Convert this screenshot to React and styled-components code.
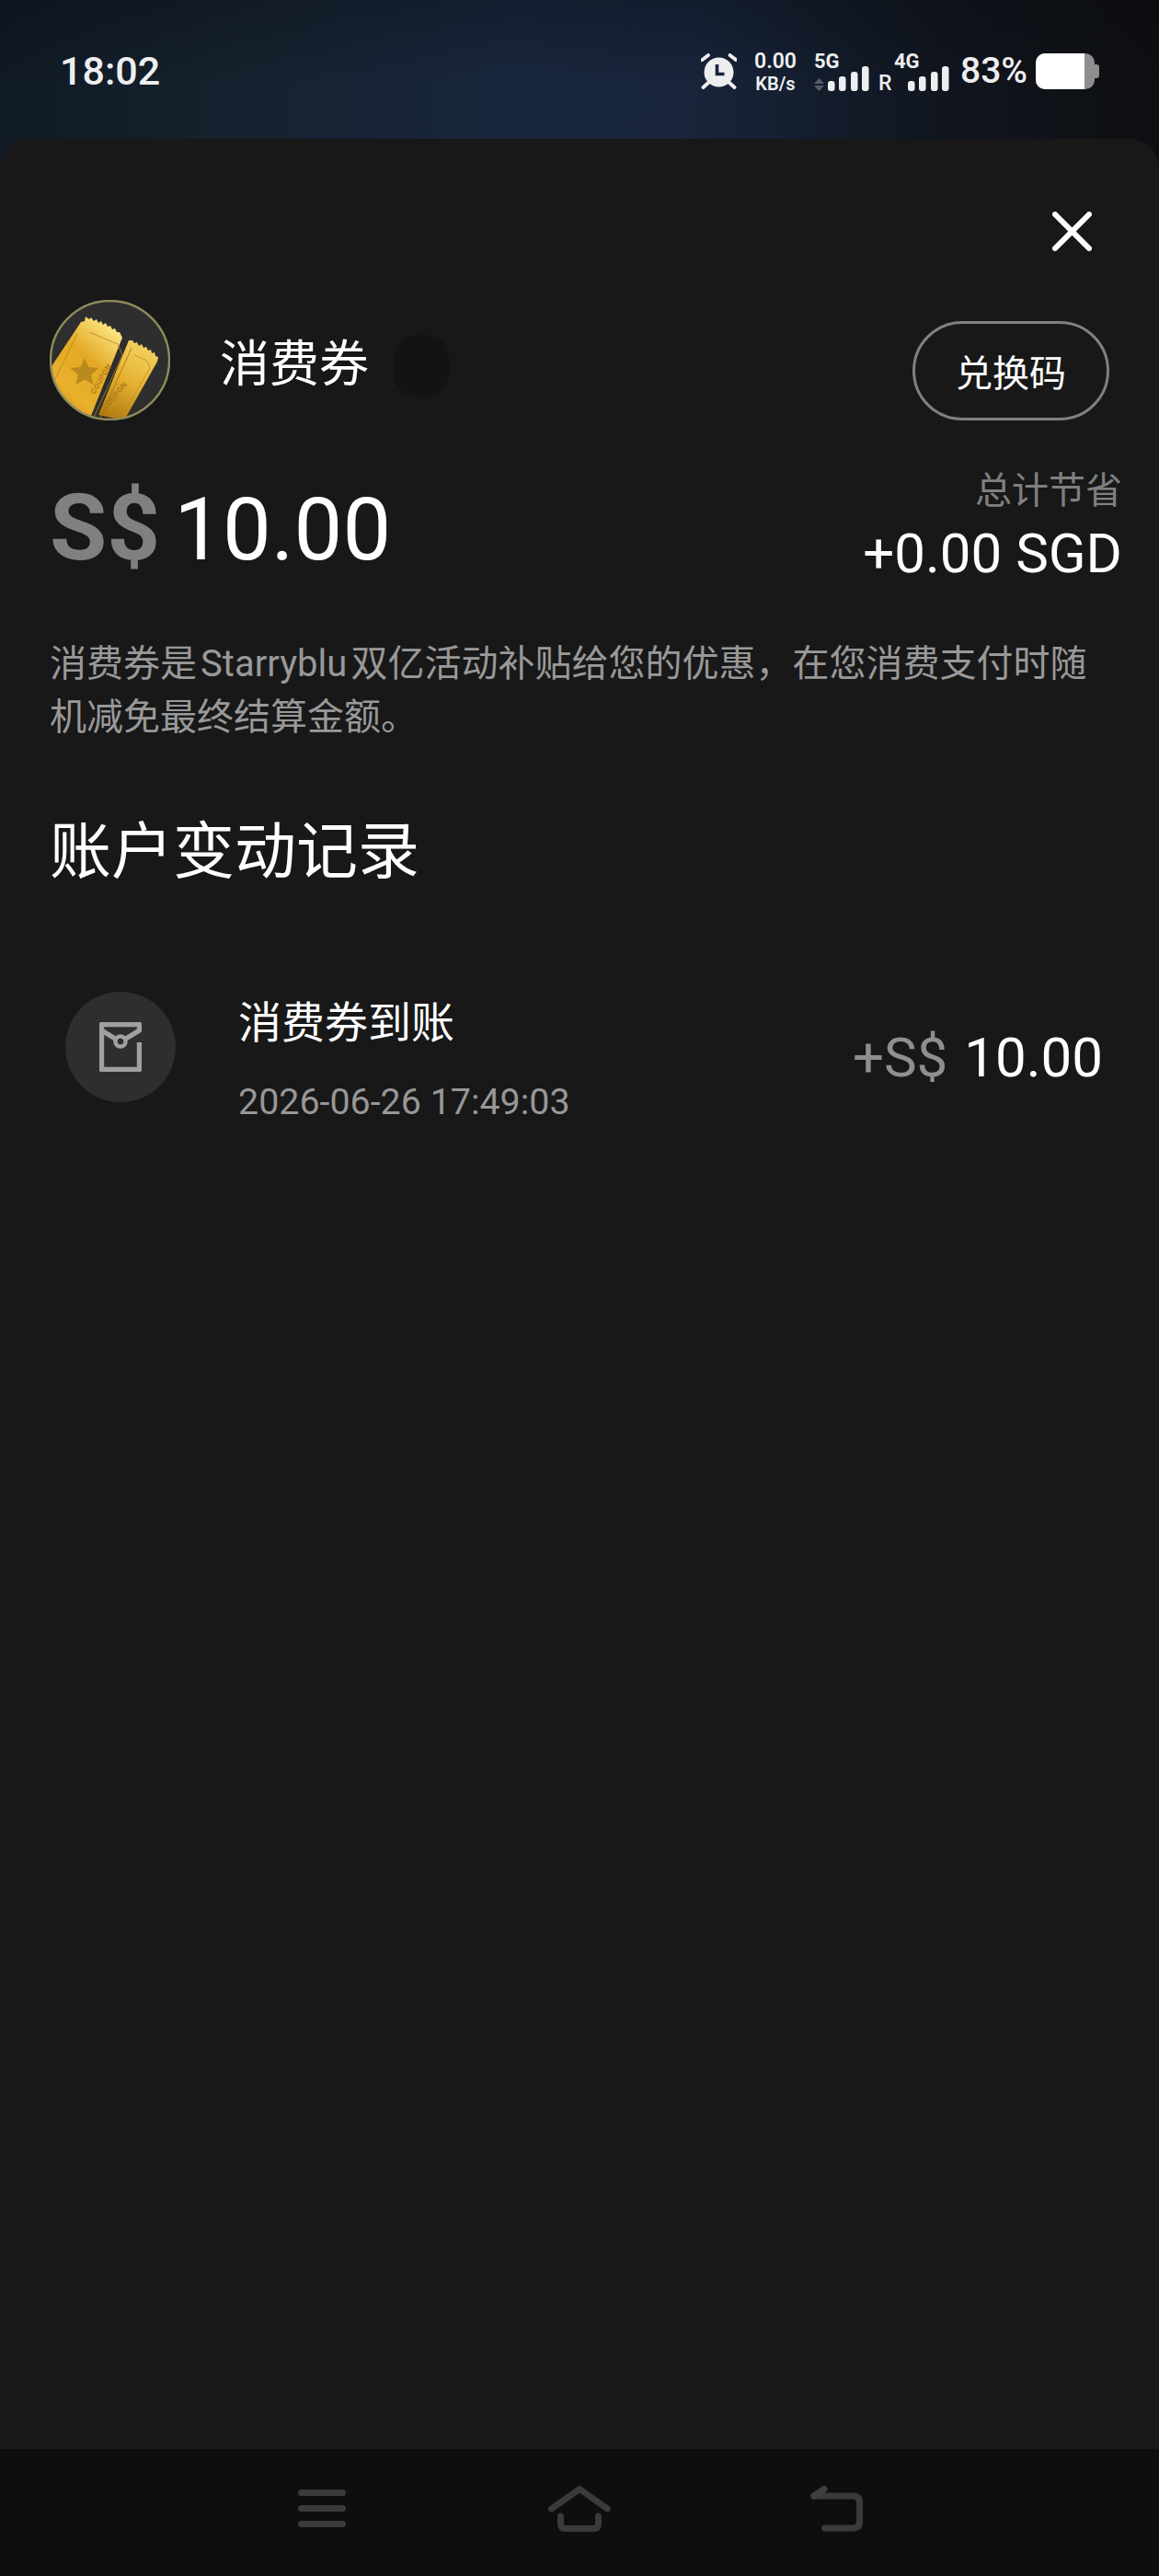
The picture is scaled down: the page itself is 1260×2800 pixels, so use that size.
import React from 'react';
import styled, { createGlobalStyle } from 'styled-components';

const GlobalStyle = createGlobalStyle`
    html, body {
        margin: 0;
        padding: 0;
        background: #181818;
    }
    * {
        box-sizing: border-box;
    }
`;

const FONT = `Roboto, "Noto Sans CJK SC", sans-serif`;

const Page = styled.div`
    width: 1260px;
    height: 2800px;
    display: flex;
    flex-direction: column;
    font-family: ${FONT};
    overflow: hidden;
    background:
        linear-gradient(180deg, rgba(6, 8, 12, .28) 0, rgba(6, 8, 12, 0) 90px),
        linear-gradient(90deg, #101a25 0%, #16222f 22%, #18263d 44%, #17243a 60%, #10151d 82%, #0e0f12 100%);
`;

const StatusBar = styled.div`
    height: 151px;
    flex: none;
    padding: 58px 65px 0 65px;
    display: flex;
    justify-content: space-between;
    align-items: flex-start;
    color: #eeeef0;
`;

const Time = styled.div`
    font-size: 43px;
    font-weight: 500;
    line-height: 39px;
`;

const StatusIcons = styled.div`
    display: flex;
    align-items: flex-start;
`;

const SpeedStack = styled.div`
    width: 46px;
    margin: 0 19px;
    display: flex;
    flex-direction: column;
    align-items: center;
    font-weight: 600;
`;

const SpeedValue = styled.div`
    font-size: 23px;
    line-height: 18px;
    white-space: nowrap;
`;

const SpeedUnit = styled.div`
    font-size: 20px;
    line-height: 18px;
    margin-top: 6px;
    white-space: nowrap;
`;

const Sim = styled.div`
    display: flex;
    flex-direction: column;
    width: ${props => props.width}px;
    margin-right: ${props => props.gap}px;
`;

const NetLabel = styled.div`
    font-size: 22px;
    font-weight: 700;
    line-height: 16px;
    margin-left: ${props => props.offset || 0}px;
    margin-top: 1px;
    height: 13px;
`;

const SignalRow = styled.div`
    display: flex;
    align-items: flex-end;
    height: 27px;
`;

const RoamLetter = styled.span`
    font-size: 23px;
    font-weight: 500;
    line-height: 16px;
    width: 32px;
`;

const Percent = styled.div`
    font-size: 39px;
    font-weight: 500;
    line-height: 39px;
    width: 71px;
    margin-right: 11px;
    white-space: nowrap;
`;

const Battery = styled.div`
    width: 64px;
    height: 39px;
    border-radius: 10px;
    overflow: hidden;
    background: #8e8e8e;
    &::before {
        content: '';
        display: block;
        width: 53px;
        height: 100%;
        background: #fff;
    }
`;

const BatteryWrap = styled.div`
    display: flex;
    align-items: center;
    height: 39px;
`;

const BatteryNub = styled.div`
    width: 5px;
    height: 15px;
    border-radius: 0 3px 3px 0;
    background: #8e8e8e;
`;

const Sheet = styled.div`
    flex: 1;
    background: #181818;
    border-radius: 32px 32px 0 0;
    padding: 79px 54px 0;
    display: flex;
    flex-direction: column;
    color: #fff;
`;

const CloseRow = styled.div`
    display: flex;
    justify-content: flex-end;
    padding-right: 19px;
    height: 96px;
`;

const HeaderRow = styled.div`
    display: flex;
    align-items: flex-start;
    height: 131px;
`;

const CouponBadge = styled.div`
    width: 131px;
    height: 131px;
    flex: none;
`;

const CouponTitle = styled.div`
    margin: 37px 0 0 54px;
    font-size: 54px;
    line-height: 68px;
    width: 189px;
`;

const Blob = styled.div`
    width: 60px;
    height: 67px;
    margin-top: 38px;
    border-radius: 25px;
    background: #131313;
`;

const RedeemButton = styled.button`
    margin: 23px 0 0 auto;
    width: 214px;
    height: 108px;
    border: 3px solid #808080;
    border-radius: 54px;
    background: transparent;
    color: #fff;
    font-family: ${FONT};
    font-size: 40px;
    padding: 0;
`;

const BalanceRow = styled.div`
    display: flex;
    justify-content: space-between;
    align-items: flex-start;
    margin-top: 48px;
`;

const Balance = styled.div`
    display: flex;
    align-items: baseline;
    line-height: 112px;
    margin-top: 13px;
`;

const BalanceCurrency = styled.span`
    color: #808080;
    font-size: 101px;
    font-weight: 700;
    margin-right: 15px;
`;

const BalanceValue = styled.span`
    font-size: 94px;
`;

const Savings = styled.div`
    display: flex;
    flex-direction: column;
    align-items: flex-end;
    margin-right: -14px;
    margin-top: 1px;
`;

const SavingsLabel = styled.div`
    color: #808080;
    font-size: 40px;
    line-height: 56px;
`;

const SavingsValue = styled.div`
    font-size: 60px;
    line-height: 70px;
    margin-top: 5px;
`;

const Description = styled.p`
    margin: 56px 0 0;
    width: 1152px;
    color: #999;
    font-size: 40px;
    line-height: 58px;
`;

const SectionTitle = styled.h2`
    margin: 72px 0 0;
    font-size: 67px;
    font-weight: 400;
    line-height: 90px;
`;

const RecordRow = styled.div`
    display: flex;
    align-items: flex-start;
    margin-top: 107px;
    padding: 0 7px 0 17px;
`;

const RecordIcon = styled.div`
    width: 120px;
    height: 120px;
    flex: none;
    border-radius: 50%;
    background: #2e2e2e;
    display: flex;
    align-items: center;
    justify-content: center;
`;

const RecordText = styled.div`
    margin-left: 68px;
    display: flex;
    flex-direction: column;
`;

const RecordTitle = styled.div`
    font-size: 47px;
    line-height: 64px;
    margin-top: 2px;
`;

const RecordDate = styled.div`
    color: #979797;
    font-size: 39.4px;
    line-height: 48px;
    margin-top: 30px;
`;

const RecordAmount = styled.div`
    margin-left: auto;
    margin-top: 36px;
    font-size: 60px;
    line-height: 72px;
    display: flex;
    align-items: baseline;
`;

const RecordCurrency = styled.span`
    color: #8f8f8f;
    margin-right: 18px;
`;

const NavBar = styled.div`
    height: 138px;
    flex: none;
    background: #0e0e0e;
    display: flex;
    align-items: flex-start;
    padding: 40px 0 0 324px;
`;

const NavSlot = styled.div`
    width: ${props => props.width}px;
    display: flex;
`;

const Hamburger = styled.div`
    width: 52px;
    display: flex;
    flex-direction: column;
    gap: 10px;
    margin-top: 4px;
    span {
        height: 7px;
        border-radius: 4px;
        background: #3a3a3a;
    }
`;

const AlarmIcon = () => (
    <svg width="39" height="39" viewBox="0 0 39 39">
        <circle cx="19.5" cy="20.5" r="16" fill="#eeeef0" />
        <path d="M17.5 12v10.5h8" fill="none" stroke="#17233a" strokeWidth="3.6" />
        <path d="M1.5 7l6.5-5M31.5 2l6.5 5M2.5 37l5.5-5M31 32l5.5 5" fill="none" stroke="#eeeef0" strokeWidth="3.8" strokeLinecap="round" />
    </svg>
);

const SignalBars = () => (
    <svg width="45" height="27" viewBox="0 0 45 27">
        <rect x="0" y="16" width="7.5" height="11" rx="3" fill="#eeeef0" />
        <rect x="12" y="11" width="7.5" height="16" rx="3" fill="#eeeef0" />
        <rect x="25" y="6" width="7.5" height="21" rx="3" fill="#eeeef0" />
        <rect x="37" y="0" width="7.5" height="27" rx="3" fill="#eeeef0" />
    </svg>
);

const DataArrows = () => (
    <svg width="15" height="14" viewBox="0 0 15 14" style={{ flex: 'none' }}>
        <path d="M0 6L5.5 0 11 6zM0 8l5.5 6L11 8z" fill="#555c66" />
    </svg>
);

const CloseIcon = () => (
    <svg width="43" height="43" viewBox="0 0 43 43">
        <path d="M3 3l37 37M40 3L3 40" stroke="#fff" strokeWidth="6" strokeLinecap="round" />
    </svg>
);

const CouponArt = () => (
    <svg width="131" height="131" viewBox="4 6 131 131">
        <defs>
            <linearGradient id="ticketGold" x1="0.25" y1="1" x2="0.85" y2="0.1">
                <stop offset="0" stopColor="#c68e1a" />
                <stop offset="0.3" stopColor="#e9b02c" />
                <stop offset="0.65" stopColor="#e3a925" />
                <stop offset="1" stopColor="#fbe27d" />
            </linearGradient>
            <linearGradient id="ticketBack" x1="0.7" y1="0" x2="0.3" y2="1">
                <stop offset="0" stopColor="#f3d262" />
                <stop offset="0.5" stopColor="#e6b232" />
                <stop offset="1" stopColor="#b27c12" />
            </linearGradient>
            <clipPath id="badgeClip">
                <circle cx="69.5" cy="71.5" r="64.5" />
            </clipPath>
        </defs>
        <circle cx="69.5" cy="71.5" r="64.5" fill="#2e2e2e" />
        <g clipPath="url(#badgeClip)">
            <path
                d="M90 50l4 0 2 3 3-1 2 4 3-2 2 4 3-1 2 4 3-1 1 4 3-1 1 4 3 1-1 5-36 64-28-6z"
                fill="url(#ticketBack)"
            />
            <path
                d="M38 30l4-1 1-5 4 3 2-2 3 4 3-2 2 4 3-2 2 4 3-2 2 4 3-1 2 4 3-1 2 4 3 0 3 6-38 95-52-24 0-20z"
                fill="url(#ticketGold)"
            />
            <path d="M47 41l31 13 5 12-33 72M34 43L7 98" fill="none" stroke="#b9851c" strokeWidth="0.8" />
            <path d="M93 58L58 137" stroke="#b07c18" strokeWidth="1" />
            <path d="M96 66l14 6 3 8-30 52" fill="none" stroke="#c08c22" strokeWidth="0.8" />
            <path
                d="M42 69l4.4 10 11 1-8.3 7.2 2.5 10.8-9.6-5.6-9.5 5.7 2.4-10.8-8.4-7.2 11-1.1z"
                fill="#b98a1f"
            />
            <text x="0" y="0" fontFamily="Roboto, sans-serif" fontSize="8" fontWeight="500" fill="#a8761a" transform="translate(53 109) rotate(-60)" textLength="36">COUPON</text>
            <text x="0" y="0" fontFamily="Roboto, sans-serif" fontSize="8" fontWeight="500" fill="#a8761a" transform="translate(65 126) rotate(-50)" textLength="36">COUPON</text>
        </g>
        <circle cx="69.5" cy="71.5" r="64.5" fill="none" stroke="#8f8b5c" strokeWidth="2.4" />
    </svg>
);

const EnvelopeIcon = () => (
    <svg width="46" height="54" viewBox="0 0 46 54">
        <path d="M43.5 22v29.5h-41v-49h41V9L28 18.5" fill="none" stroke="#a0a0a0" strokeWidth="5.4" strokeLinejoin="round" />
        <path d="M2.5 9L18 18.5" fill="none" stroke="#a0a0a0" strokeWidth="5.4" />
        <circle cx="23" cy="21" r="5.5" fill="none" stroke="#a0a0a0" strokeWidth="4.5" />
    </svg>
);

const HomeIcon = () => (
    <svg width="68" height="50" viewBox="0 0 68 50">
        <path d="M3.5 25L34 3.5 64.5 25" fill="none" stroke="#3a3a3a" strokeWidth="7" strokeLinecap="round" strokeLinejoin="round" />
        <path d="M13.5 33v8q0 5.5 5.5 5.5h30q5.5 0 5.5-5.5v-8" fill="none" stroke="#3a3a3a" strokeWidth="7" strokeLinecap="round" />
    </svg>
);

const BackIcon = () => (
    <svg width="57" height="50" viewBox="0 0 57 50">
        <path d="M4 11H46Q53.5 11 53.5 18V39Q53.5 46 46 46H15.5" fill="none" stroke="#3a3a3a" strokeWidth="7" strokeLinecap="round" />
        <path d="M4 11L15 3.5" fill="none" stroke="#3f3f3f" strokeWidth="7" strokeLinecap="round" />
    </svg>
);

const App = () => {
    return (
        <Page>
            <GlobalStyle />
            <StatusBar>
                <Time>18:02</Time>
                <StatusIcons>
                    <AlarmIcon />
                    <SpeedStack>
                        <SpeedValue>0.00</SpeedValue>
                        <SpeedUnit>KB/s</SpeedUnit>
                    </SpeedStack>
                    <Sim width={60} gap={10}>
                        <NetLabel>5G</NetLabel>
                        <SignalRow>
                            <DataArrows />
                            <SignalBars />
                        </SignalRow>
                    </Sim>
                    <Sim width={77} gap={12}>
                        <NetLabel offset={17}>4G</NetLabel>
                        <SignalRow>
                            <RoamLetter>R</RoamLetter>
                            <SignalBars />
                        </SignalRow>
                    </Sim>
                    <Percent>83%</Percent>
                    <BatteryWrap>
                        <Battery />
                        <BatteryNub />
                    </BatteryWrap>
                </StatusIcons>
            </StatusBar>

            <Sheet>
                <CloseRow>
                    <CloseIcon />
                </CloseRow>

                <HeaderRow>
                    <CouponBadge>
                        <CouponArt />
                    </CouponBadge>
                    <CouponTitle>消费券</CouponTitle>
                    <Blob />
                    <RedeemButton>兑换码</RedeemButton>
                </HeaderRow>

                <BalanceRow>
                    <Balance>
                        <BalanceCurrency>S$</BalanceCurrency>
                        <BalanceValue>10.00</BalanceValue>
                    </Balance>
                    <Savings>
                        <SavingsLabel>总计节省</SavingsLabel>
                        <SavingsValue>+0.00 SGD</SavingsValue>
                    </Savings>
                </BalanceRow>

                <Description>
                    {'消费券是\u200AStarryblu\u200A双亿活动补贴给您的优惠，在您消费支付时随机减免最终结算金额。'}
                </Description>

                <SectionTitle>账户变动记录</SectionTitle>

                <RecordRow>
                    <RecordIcon>
                        <EnvelopeIcon />
                    </RecordIcon>
                    <RecordText>
                        <RecordTitle>消费券到账</RecordTitle>
                        <RecordDate>2026-06-26 17:49:03</RecordDate>
                    </RecordText>
                    <RecordAmount>
                        <RecordCurrency>+S$</RecordCurrency>
                        <span>10.00</span>
                    </RecordAmount>
                </RecordRow>
            </Sheet>

            <NavBar>
                <NavSlot width={272}>
                    <Hamburger>
                        <span />
                        <span />
                        <span />
                    </Hamburger>
                </NavSlot>
                <NavSlot width={285}>
                    <HomeIcon />
                </NavSlot>
                <NavSlot width={57}>
                    <BackIcon />
                </NavSlot>
            </NavBar>
        </Page>
    );
};

export default App;
